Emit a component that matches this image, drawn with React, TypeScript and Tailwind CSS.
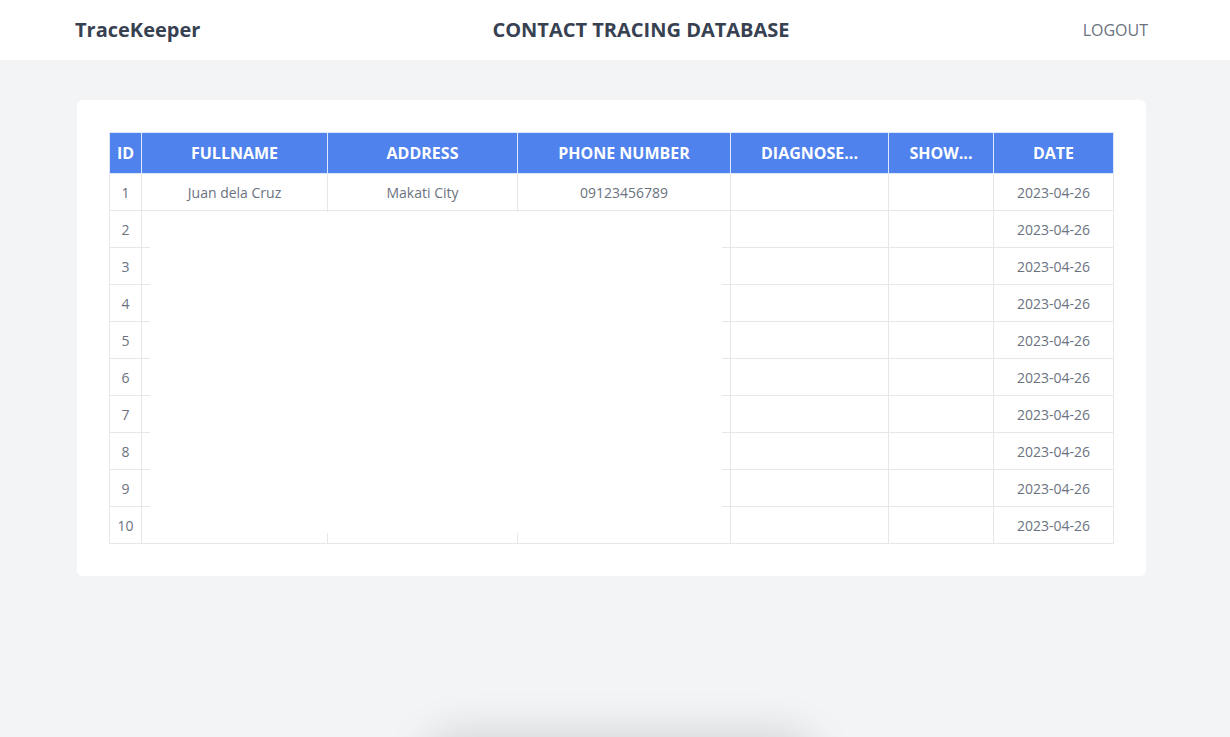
import React from 'react'

const rows = Array.from({ length: 10 }, (_, i) => ({
  id: i + 1,
  fullname: i === 0 ? 'Juan dela Cruz' : '',
  address: i === 0 ? 'Makati City' : '',
  phone: i === 0 ? '09123456789' : '',
  diagnosed: '',
  showing: '',
  date: '2023-04-26',
}))

const headers = [
  { label: 'ID', w: 'w-[32px]' },
  { label: 'FULLNAME', w: 'w-[186px]' },
  { label: 'ADDRESS', w: 'w-[190px]' },
  { label: 'PHONE NUMBER', w: 'w-[213px]' },
  { label: 'DIAGNOSE...', w: 'w-[158px]' },
  { label: 'SHOW...', w: 'w-[105px]' },
  { label: 'DATE', w: 'w-[120px]' },
]

export default function App() {
  return (
    <div
      className="relative h-screen overflow-hidden bg-[#f3f4f6]"
      style={{ fontFamily: '"Open Sans", "Noto Sans", sans-serif' }}
    >
      {/* Top bar */}
      <header className="h-[60px] bg-white flex items-center justify-between pl-[75px] pr-[82px]">
        <span className="text-xl font-bold text-[#374151] w-[230px]">TraceKeeper</span>
        <h1 className="text-xl font-bold text-[#374151]">CONTACT TRACING DATABASE</h1>
        <div className="w-[171px] flex justify-end">
          <button className="text-base text-[#6b7280]">LOGOUT</button>
        </div>
      </header>

      <main className="pt-10 pl-[77px] pr-[84px]">
        <div className="relative bg-white rounded-md p-8">
          <table className="table-fixed border-collapse w-[1004px] text-sm text-[#6b7280]">
            <thead>
              <tr className="bg-[#4f82ed] text-white h-[41px]">
                {headers.map((h) => (
                  <th
                    key={h.label}
                    className={`${h.w} border border-[#dfe8fb] text-base font-bold text-center whitespace-nowrap overflow-hidden`}
                  >
                    {h.label}
                  </th>
                ))}
              </tr>
            </thead>
            <tbody>
              {rows.map((r) => (
                <tr key={r.id} className="h-[37px]">
                  <td className="border border-[#e5e7eb] text-center pt-px">{r.id}</td>
                  <td className="border border-[#e5e7eb] text-center pt-px">{r.fullname}</td>
                  <td className="border border-[#e5e7eb] text-center pt-px">{r.address}</td>
                  <td className="border border-[#e5e7eb] text-center pt-px">{r.phone}</td>
                  <td className="border border-[#e5e7eb] text-center pt-px">{r.diagnosed}</td>
                  <td className="border border-[#e5e7eb] text-center pt-px">{r.showing}</td>
                  <td className="border border-[#e5e7eb] text-center pt-px">{r.date}</td>
                </tr>
              ))}
            </tbody>
          </table>

          {/* white panel lying over the table */}
          <div className="absolute left-[73px] top-[112px] w-[572px] h-[321px] bg-white" />
        </div>
      </main>

      {/* shadow of an element just below the fold */}
      <div className="absolute left-[440px] top-[752px] w-[360px] h-[40px] rounded-full bg-[#e5e7eb] shadow-[0_0_45px_18px_rgba(0,0,0,0.14)]" />
    </div>
  )
}
